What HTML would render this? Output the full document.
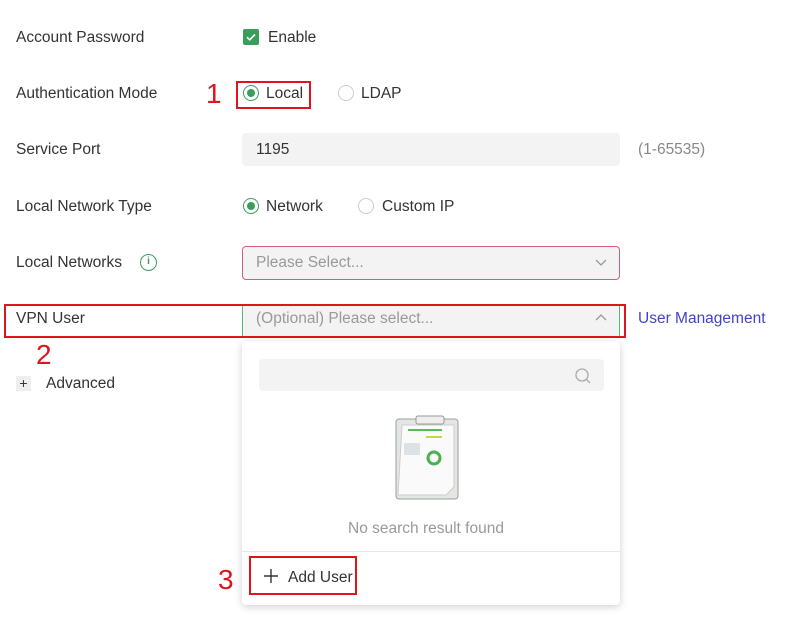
<!DOCTYPE html>
<html><head><style>
*{margin:0;padding:0;box-sizing:border-box}
body{width:796px;height:619px;background:#fff;font-family:"Liberation Sans",sans-serif;font-size:15.5px;color:#333;position:relative;overflow:hidden}
.a{position:absolute;white-space:nowrap;line-height:20px}
.lbl{left:16px}
.radio{position:absolute;width:16px;height:16px;border-radius:50%;border:1px solid #ccc;background:#fff}
.radio.on{border-color:#3a9e5a}
.radio.on::after{content:"";position:absolute;left:3px;top:3px;width:8px;height:8px;border-radius:50%;background:#3a9e5a}
.red{position:absolute;border:2px solid #e0141e}
.num{position:absolute;color:#e0141e;font-size:28px;line-height:30px}
.inp{position:absolute;left:242px;width:378px;background:#f3f3f3;border-radius:4px}
</style></head><body>
<div class="a lbl" style="top:28px">Account Password</div>
<div class="a" style="left:243px;top:29px;width:16px;height:16px;background:#3a9e5a;border-radius:2px"><svg width="16" height="16"><path d="M4 8.2l2.7 2.6L12 5.5" stroke="#fff" stroke-width="1.6" fill="none"/></svg></div>
<div class="a" style="left:268px;top:28px">Enable</div>

<div class="a lbl" style="top:84px">Authentication Mode</div>
<div class="num" style="left:206px;top:79px">1</div>
<div class="red" style="left:236px;top:81px;width:75px;height:28px"></div>
<div class="radio on" style="left:243px;top:85px"></div>
<div class="a" style="left:266px;top:84px">Local</div>
<div class="radio" style="left:338px;top:85px"></div>
<div class="a" style="left:361px;top:84px">LDAP</div>

<div class="a lbl" style="top:140px">Service Port</div>
<div class="inp" style="top:133px;height:33px"></div>
<div class="a" style="left:256px;top:140px">1195</div>
<div class="a" style="left:638px;top:140px;color:#888">(1-65535)</div>

<div class="a lbl" style="top:197px">Local Network Type</div>
<div class="radio on" style="left:243px;top:198px"></div>
<div class="a" style="left:266px;top:197px">Network</div>
<div class="radio" style="left:358px;top:198px"></div>
<div class="a" style="left:382px;top:197px">Custom IP</div>

<div class="a lbl" style="top:253px">Local Networks</div>
<div class="a" style="left:140px;top:254px;width:17px;height:17px;border:1.5px solid #3a9e5a;border-radius:50%;color:#3a9e5a;font-size:10px;text-align:center;line-height:14px;font-weight:bold">i</div>
<div class="inp" style="top:246px;height:34px;border:1px solid #d0607a"></div>
<div class="a" style="left:256px;top:253px;color:#999">Please Select...</div>
<svg class="a" style="left:595px;top:257px" width="12" height="10"><path d="M1 3l5 5 5-5" stroke="#999" stroke-width="1.3" fill="none"/></svg>

<div class="red" style="left:4px;top:304px;width:622px;height:34px"></div>
<div class="a lbl" style="top:309px">VPN User</div>
<div class="inp" style="top:306px;height:30px;border-left:1px solid #5cb870;border-right:1px solid #5cb870;border-radius:0"></div>
<div class="a" style="left:256px;top:309px;color:#999">(Optional) Please select...</div>
<svg class="a" style="left:595px;top:313px" width="12" height="10"><path d="M1 7l5-5 5 5" stroke="#999" stroke-width="1.3" fill="none"/></svg>
<div class="a" style="left:638px;top:309px;color:#4343c8">User Management</div>
<div class="num" style="left:36px;top:340px">2</div>

<div class="a" style="left:16px;top:376px;width:15px;height:15px;background:#eee;text-align:center;line-height:15px;font-size:14px;color:#333">+</div>
<div class="a" style="left:46px;top:374px">Advanced</div>

<div class="a" style="left:242px;top:341px;width:378px;height:264px;background:#fff;border-radius:4px;box-shadow:0 2px 8px rgba(0,0,0,.18)"></div>
<div class="a" style="left:259px;top:359px;width:345px;height:32px;background:#f3f3f3;border-radius:4px"></div>
<svg class="a" style="left:574px;top:367px" width="18" height="18"><circle cx="8" cy="8" r="6" stroke="#aaa" stroke-width="1.3" fill="none"/><path d="M12.5 12.5l3.5 3.5" stroke="#aaa" stroke-width="1.3"/></svg>
<svg class="a" style="left:388px;top:415px" width="80" height="90">
<rect x="8" y="4" width="62" height="80" rx="3" fill="#e4e6e4" stroke="#9aa09a" stroke-width="1"/>
<rect x="28" y="1" width="28" height="8" rx="2" fill="#eee" stroke="#999"/>
<path d="M14 10h52v62l-8 8H10z" fill="#fafafa" stroke="#ccc"/>
<path d="M20 15h34" stroke="#5cb85c" stroke-width="2"/><path d="M38 22h16" stroke="#c8d83a" stroke-width="2"/>
<rect x="16" y="28" width="16" height="12" fill="#dde2e6"/>
<circle cx="46" cy="43" r="6" stroke="#4caf50" stroke-width="3" fill="none"/>
</svg>
<div class="a" style="left:348px;top:519px;color:#999">No search result found</div>
<div class="a" style="left:242px;top:551px;width:378px;height:1px;background:#e8e8e8"></div>
<div class="num" style="left:218px;top:565px">3</div>
<div class="red" style="left:249px;top:556px;width:108px;height:39px"></div>
<svg class="a" style="left:263px;top:568px" width="16" height="16"><path d="M8 1v14M1 8h14" stroke="#333" stroke-width="1.4"/></svg>
<div class="a" style="left:288px;top:568px">Add User</div>
</body></html>
